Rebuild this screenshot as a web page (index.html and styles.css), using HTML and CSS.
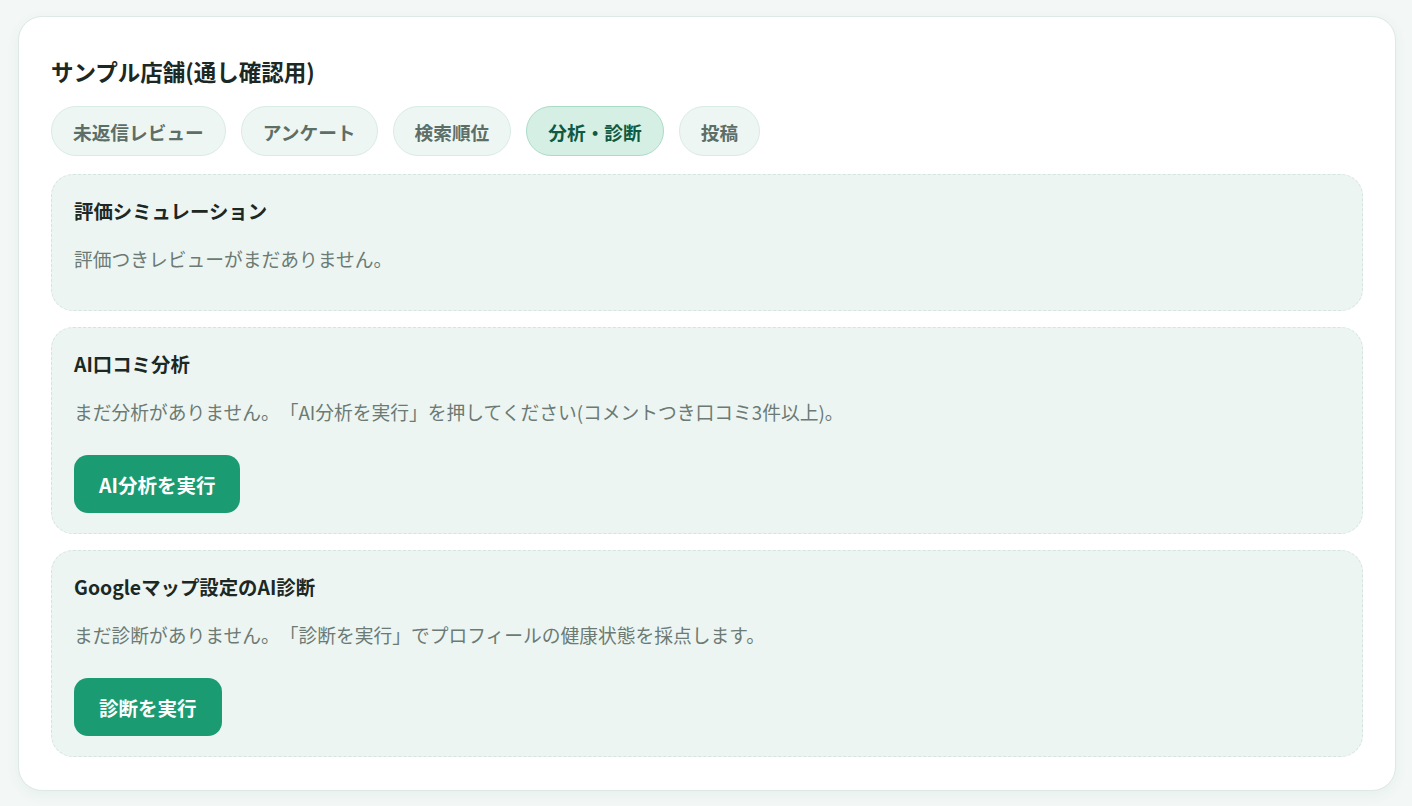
FILE: index.html
```html
<!DOCTYPE html>
<html lang="ja">
<head>
<meta charset="utf-8">
<title>サンプル店舗</title>
<link rel="stylesheet" href="styles.css">
</head>
<body>
<main class="card">
  <h2 class="store-title">サンプル店舗(通し確認用)</h2>
  <nav class="tabs">
    <button class="tab">未返信レビュー</button>
    <button class="tab">アンケート</button>
    <button class="tab">検索順位</button>
    <button class="tab active">分析・診断</button>
    <button class="tab">投稿</button>
  </nav>
  <div class="sections">
    <section class="panel">
      <h3 class="panel-title">評価シミュレーション</h3>
      <p class="panel-text">評価つきレビューがまだありません。</p>
    </section>
    <section class="panel">
      <h3 class="panel-title">AI口コミ分析</h3>
      <p class="panel-text">まだ分析がありません。「AI分析を実行」を押してください(コメントつき口コミ3件以上)。</p>
      <div class="actions"><button class="run-btn">AI分析を実行</button></div>
    </section>
    <section class="panel">
      <h3 class="panel-title">Googleマップ設定のAI診断</h3>
      <p class="panel-text">まだ診断がありません。「診断を実行」でプロフィールの健康状態を採点します。</p>
      <div class="actions"><button class="run-btn">診断を実行</button></div>
    </section>
  </div>
</main>
</body>
</html>
```

FILE: styles.css
```css
* { box-sizing: border-box; }
html, body { height: 100%; }
body {
  margin: 0;
  padding: 16px 16px 16px 18px;
  background: #f3f8f6;
  font-family: "Noto Sans CJK JP", "Noto Sans", sans-serif;
  color: #1f2b27;
  text-spacing-trim: space-all;
}
.card {
  background: #ffffff;
  border: 1px solid #dce9e4;
  border-radius: 24px;
  padding: 32px 32px 33px;
  box-shadow: 0 4px 14px rgba(40, 90, 70, 0.06);
}
.store-title {
  margin: 8px 0 21px;
  font-size: 22.5px;
  line-height: 28px;
  font-weight: 700;
  color: #1c2824;
}
.tabs {
  display: flex;
  gap: 15px;
  margin-bottom: 18px;
}
.tab {
  height: 50px;
  padding: 0 21px;
  border-radius: 25px;
  border: 1px solid #d9ebe4;
  background: #eef6f3;
  color: #5d6e67;
  font-family: inherit;
  font-size: 18.7px;
  font-weight: 700;
  text-spacing-trim: space-all;
}
.tab.active {
  background: #d6efe5;
  border-color: #a9dcc7;
  color: #0e5a42;
}
.sections {
  display: flex;
  flex-direction: column;
  gap: 16px;
}
.panel {
  background: #edf5f2;
  border: 1px dashed #d3e5de;
  border-radius: 22px;
  padding: 23px 22px 20px;
}
.panel-title {
  margin: 0 0 23px;
  font-size: 19.4px;
  line-height: 26px;
  font-weight: 700;
  color: #1c2824;
}
.panel-text {
  margin: 0 0 19px;
  font-size: 18.75px;
  line-height: 24px;
  color: #6b7a74;
}
.actions {
  margin-top: 31px;
}
.run-btn {
  height: 58px;
  padding: 0 25px;
  border: none;
  border-radius: 14px;
  background: #1b9b72;
  color: #ffffff;
  font-family: inherit;
  font-size: 19.5px;
  font-weight: 700;
  text-spacing-trim: space-all;
}
```
